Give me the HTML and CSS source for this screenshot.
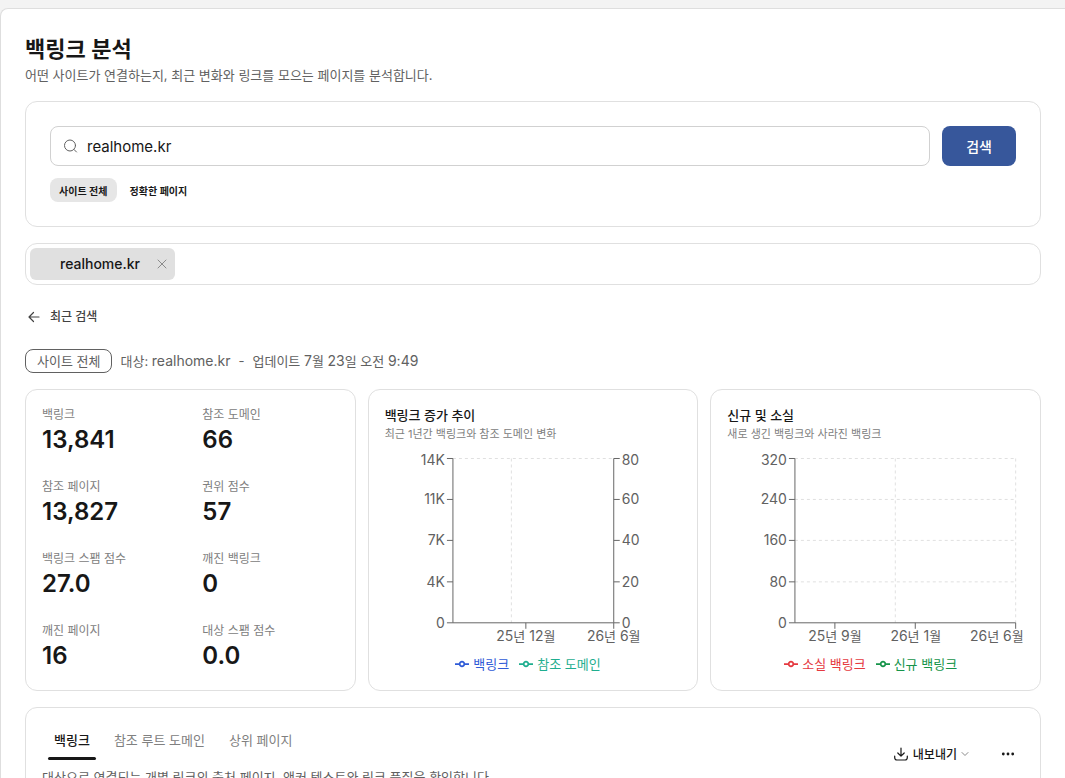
FILE: index.html
```html
<!DOCTYPE html>
<html lang="ko">
<head>
    <meta charset="UTF-8">
    <meta name="viewport" content="width=device-width, initial-scale=1.0">
    <title>백링크 분석</title>
    <link rel="stylesheet" href="styles.css">
</head>
<body>
    <main class="page">
        <header class="page-header">
            <h1>백링크 분석</h1>
            <p>어떤 사이트가 연결하는지, 최근 변화와 링크를 모으는 페이지를 분석합니다.</p>
        </header>

        <form class="card search-card">
            <div class="search-row">
                <div class="search-field">
                    <svg width="16" height="16" viewBox="0 0 16 16" fill="none" stroke="currentColor" stroke-linecap="round">
                        <circle cx="7" cy="7.5" r="5.5"/>
                        <path d="M11 11.5L13.5 14"/>
                    </svg>
                    <input type="text" value="realhome.kr" aria-label="도메인 또는 URL">
                </div>
                <button type="submit" class="search-button">검색</button>
            </div>
            <div class="scope">
                <button type="button" class="scope-button active">사이트 전체</button>
                <button type="button" class="scope-button">정확한 페이지</button>
            </div>
        </form>

        <div class="card site-tabs">
            <div class="site-tab">
                <span>realhome.kr</span>
                <button type="button" class="close-button" aria-label="닫기">
                    <svg width="10" height="10" viewBox="0 0 10 10" fill="none" stroke="currentColor" stroke-linecap="round">
                        <path d="M1 1L9 9M9 1L1 9"/>
                    </svg>
                </button>
            </div>
        </div>

        <a href="#" class="back-link">
            <svg width="12" height="12" viewBox="0 0 12 12" fill="none" stroke="currentColor" stroke-width="1.2" stroke-linecap="round" stroke-linejoin="round">
                <path d="M11 6H1M5.5 1.5L1 6L5.5 10.5"/>
            </svg>
            최근 검색
        </a>

        <div class="target">
            <span class="target-badge">사이트 전체</span>
            <span>대상: <span class="latin">realhome.kr</span></span>
            <span>-</span>
            <span>업데이트 <span class="latin">7</span>월 <span class="latin">23</span>일 오전 <span class="latin">9:49</span></span>
        </div>

        <div class="overview">
            <dl class="card metrics">
                <div><dt>백링크</dt><dd>13,841</dd></div>
                <div><dt>참조 도메인</dt><dd>66</dd></div>
                <div><dt>참조 페이지</dt><dd>13,827</dd></div>
                <div><dt>권위 점수</dt><dd>57</dd></div>
                <div><dt>백링크 스팸 점수</dt><dd>27.0</dd></div>
                <div><dt>깨진 백링크</dt><dd>0</dd></div>
                <div><dt>깨진 페이지</dt><dd>16</dd></div>
                <div><dt>대상 스팸 점수</dt><dd>0.0</dd></div>
            </dl>

            <section class="card chart-card">
                <h2>백링크 증가 추이</h2>
                <p>최근 1년간 백링크와 참조 도메인 변화</p>
                <svg class="chart" viewBox="0 0 297 200">
                    <path class="grid" d="M68 4.5H229M126.5 4.5V169"/>
                    <path class="axis" d="M68 4.5V169M229 4.5V169"/>
                    <path class="axis" d="M62 4.5h6M62 45.5h6M62 86.5h6M62 128h6M62 169h6"/>
                    <path class="axis" d="M229 4.5h6M229 45.5h6M229 86.5h6M229 128h6M229 169h6"/>
                    <path class="axis" d="M68 169H229M141 169v6M229 169v6"/>
                    <g class="end">
                        <text x="60" y="11">14K</text>
                        <text x="60" y="50">11K</text>
                        <text x="60" y="91">7K</text>
                        <text x="60" y="133">4K</text>
                        <text x="60" y="174">0</text>
                    </g>
                    <g>
                        <text x="237" y="11">80</text>
                        <text x="237" y="50">60</text>
                        <text x="237" y="91">40</text>
                        <text x="237" y="133">20</text>
                        <text x="237" y="174">0</text>
                    </g>
                    <g class="middle">
                        <text x="141" y="187">25<tspan>년</tspan> 12<tspan>월</tspan></text>
                        <text x="229" y="187">26<tspan>년</tspan> 6<tspan>월</tspan></text>
                    </g>
                </svg>
                <ul class="legend">
                    <li class="blue"><svg width="14" height="14" viewBox="0 0 32 32"><path d="M0 16H10.7A5.3 5.3 0 1 1 21.3 16H32M21.3 16A5.3 5.3 0 1 1 10.7 16"/></svg>백링크</li>
                    <li class="teal"><svg width="14" height="14" viewBox="0 0 32 32"><path d="M0 16H10.7A5.3 5.3 0 1 1 21.3 16H32M21.3 16A5.3 5.3 0 1 1 10.7 16"/></svg>참조 도메인</li>
                </ul>
            </section>

            <section class="card chart-card">
                <h2>신규 및 소실</h2>
                <p>새로 생긴 백링크와 사라진 백링크</p>
                <svg class="chart" viewBox="0 0 297 200">
                    <path class="grid" d="M68 4.5H289M68 45.5H289M68 86.5H289M68 128H289M168.5 4.5V169M289 4.5V169"/>
                    <path class="axis" d="M68 4.5V169M62 4.5h6M62 45.5h6M62 86.5h6M62 128h6M62 169h6"/>
                    <path class="axis" d="M68 169H289M108 169v6M188.5 169v6M289 169v6"/>
                    <g class="end">
                        <text x="60" y="11">320</text>
                        <text x="60" y="50">240</text>
                        <text x="60" y="91">160</text>
                        <text x="60" y="133">80</text>
                        <text x="60" y="174">0</text>
                        <text x="297" y="187">26<tspan>년</tspan> 6<tspan>월</tspan></text>
                    </g>
                    <g class="middle">
                        <text x="108" y="187">25<tspan>년</tspan> 9<tspan>월</tspan></text>
                        <text x="189" y="187">26<tspan>년</tspan> 1<tspan>월</tspan></text>
                    </g>
                </svg>
                <ul class="legend">
                    <li class="red"><svg width="14" height="14" viewBox="0 0 32 32"><path d="M0 16H10.7A5.3 5.3 0 1 1 21.3 16H32M21.3 16A5.3 5.3 0 1 1 10.7 16"/></svg>소실 백링크</li>
                    <li class="green"><svg width="14" height="14" viewBox="0 0 32 32"><path d="M0 16H10.7A5.3 5.3 0 1 1 21.3 16H32M21.3 16A5.3 5.3 0 1 1 10.7 16"/></svg>신규 백링크</li>
                </ul>
            </section>
        </div>

        <section class="card details">
            <div>
                <div class="tabs" role="tablist">
                    <button type="button" role="tab" class="tab active" aria-selected="true">백링크</button>
                    <button type="button" role="tab" class="tab" aria-selected="false">참조 루트 도메인</button>
                    <button type="button" role="tab" class="tab" aria-selected="false">상위 페이지</button>
                </div>
                <p>대상으로 연결되는 개별 링크의 출처 페이지, 앵커 텍스트와 링크 품질을 확인합니다.</p>
            </div>
            <div class="actions">
                <button type="button" class="export-button">
                    <svg width="16" height="16" viewBox="0 0 16 16" fill="none" stroke="currentColor" stroke-width="1.2" stroke-linecap="round" stroke-linejoin="round">
                        <path d="M8 2V10M4.8 7L8 10.2L11.2 7M1.7 10V11.5Q1.7 14 4 14H12Q14.3 14 14.3 11.5V10"/>
                    </svg>
                    내보내기
                    <svg class="chevron" width="8" height="8" viewBox="0 0 8 8" fill="none" stroke="currentColor" stroke-linecap="round" stroke-linejoin="round">
                        <path d="M1 2.5L4 5.5L7 2.5"/>
                    </svg>
                </button>
                <button type="button" class="more-button" aria-label="더보기">
                    <svg width="14" height="4" viewBox="0 0 14 4" fill="currentColor">
                        <circle cx="2.3" cy="2" r="1.4"/>
                        <circle cx="7" cy="2" r="1.4"/>
                        <circle cx="11.7" cy="2" r="1.4"/>
                    </svg>
                </button>
            </div>
        </section>
    </main>
</body>
</html>
```
FILE: styles.css
```css
* {
    box-sizing: border-box;
}
body {
    margin: 0;
    padding-top: 8px;
    background-color: #f3f3f3;
    color: #171717;
    font-family: Inter, "Noto Sans CJK KR", sans-serif;
    font-size: 13px;
    line-height: 20px;
}
h1, h2, p, dl, dd, ul {
    margin: 0;
    padding: 0;
}
button, input {
    font-family: inherit;
    color: inherit;
}
button {
    padding: 0;
    border: none;
    background: none;
    cursor: pointer;
}
.page {
    display: flex;
    flex-direction: column;
    gap: 16px;
    padding: 24px;
    background: #ffffff;
    border-top: 1px solid #dedede;
    border-left: 1px solid #dedede;
    border-top-left-radius: 8px;
}
.card {
    background: #ffffff;
    border: 1px solid #e0e0e0;
    border-radius: 12px;
}
.latin {
    font-size: 14px;
}

.page-header h1 {
    font-size: 22px;
    font-weight: 600;
    line-height: 32px;
}
.page-header p {
    color: #616161;
}

.search-card {
    display: flex;
    flex-direction: column;
    gap: 12px;
    padding: 24px;
}
.search-row {
    display: flex;
    gap: 12px;
}
.search-field {
    display: flex;
    flex: 1;
    align-items: center;
    gap: 8px;
    height: 40px;
    padding: 0 12px;
    border: 1px solid #d1d1d1;
    border-radius: 8px;
    color: #616161;
}
.search-field input {
    flex: 1;
    min-width: 0;
    padding: 0;
    border: none;
    outline: none;
    background: none;
    color: #171717;
    font-size: 15px;
}
.search-button {
    padding: 0 24px;
    border-radius: 8px;
    background-color: #37579b;
    color: #ffffff;
    font-size: 14px;
    font-weight: 500;
}
.scope {
    display: flex;
    gap: 4px;
}
.scope-button {
    height: 24px;
    padding: 0 9px;
    border-radius: 8px;
    font-size: 10px;
    font-weight: 600;
}
.scope-button.active {
    background-color: #e6e6e6;
}

.site-tabs {
    display: flex;
    padding: 4px;
}
.site-tab {
    display: flex;
    align-items: center;
    gap: 17px;
    height: 32px;
    padding: 0 8px 0 30px;
    border-radius: 6px;
    background-color: #e0e0e0;
    font-size: 14px;
    font-weight: 500;
}
.close-button {
    display: flex;
    color: #8a8a8a;
}

.back-link {
    display: flex;
    align-items: center;
    align-self: flex-start;
    gap: 10px;
    height: 32px;
    padding-left: 3px;
    color: #424242;
    font-size: 12px;
    font-weight: 500;
    text-decoration: none;
}

.target {
    display: flex;
    align-items: center;
    gap: 8px;
    color: #616161;
}
.target-badge {
    padding: 1px 11px;
    border: 1px solid #616161;
    border-radius: 8px;
}

.overview {
    display: grid;
    grid-template-columns: repeat(3, 1fr);
    gap: 12px;
}
.metrics {
    display: grid;
    grid-template-columns: 1fr 1fr;
    gap: 22px 24px;
    align-content: start;
    padding: 16px;
}
.metrics dt {
    color: #808080;
    font-size: 12px;
    line-height: 18px;
}
.metrics dd {
    font-size: 24px;
    font-weight: 600;
    line-height: 32px;
}
.chart-card {
    padding: 16px;
}
.chart-card h2 {
    font-size: 13px;
    font-weight: 500;
    line-height: 18px;
}
.chart-card p {
    margin-bottom: 10px;
    color: #808080;
    font-size: 11px;
}
.chart {
    display: block;
    width: 100%;
    overflow: visible;
}
.chart path {
    fill: none;
}
.chart .axis {
    stroke: #666666;
}
.chart .grid {
    stroke: #e0e0e0;
    stroke-dasharray: 3 3;
}
.chart text {
    fill: #616161;
    font-size: 14px;
}
.chart tspan {
    font-size: 13px;
}
.chart .end {
    text-anchor: end;
}
.chart .middle {
    text-anchor: middle;
}
.legend {
    display: flex;
    justify-content: center;
    list-style: none;
}
.legend li {
    display: flex;
    align-items: center;
    gap: 4px;
    margin-right: 10px;
}
.legend path {
    fill: none;
    stroke: currentColor;
    stroke-width: 4;
}
.blue {
    color: #2f5bd7;
}
.teal {
    color: #1fae8f;
}
.red {
    color: #e5393f;
}
.green {
    color: #16944a;
}

.details {
    display: flex;
    justify-content: space-between;
    padding: 16px;
}
.details p {
    margin-top: 7px;
    color: #616161;
}
.tabs {
    display: flex;
    gap: 12px;
    padding-left: 6px;
}
.tab {
    display: flex;
    flex-direction: column;
    justify-content: space-between;
    height: 36px;
    padding: 6px 6px 0;
    color: #808080;
    font-size: 13px;
    line-height: 20px;
}
.tab.active {
    color: #171717;
    font-weight: 500;
}
.tab.active::after {
    content: "";
    align-self: stretch;
    height: 3px;
    margin: 0 -6px;
    border-radius: 2px;
    background-color: #171717;
}
.actions {
    display: flex;
    gap: 16px;
    padding-top: 14px;
}
.export-button {
    display: flex;
    align-items: center;
    gap: 4px;
    height: 32px;
    padding: 0 7px;
    font-size: 12px;
    font-weight: 500;
}
.chevron {
    color: #8a8a8a;
}
.more-button {
    display: flex;
    align-items: center;
    justify-content: center;
    width: 32px;
    height: 32px;
}
```
